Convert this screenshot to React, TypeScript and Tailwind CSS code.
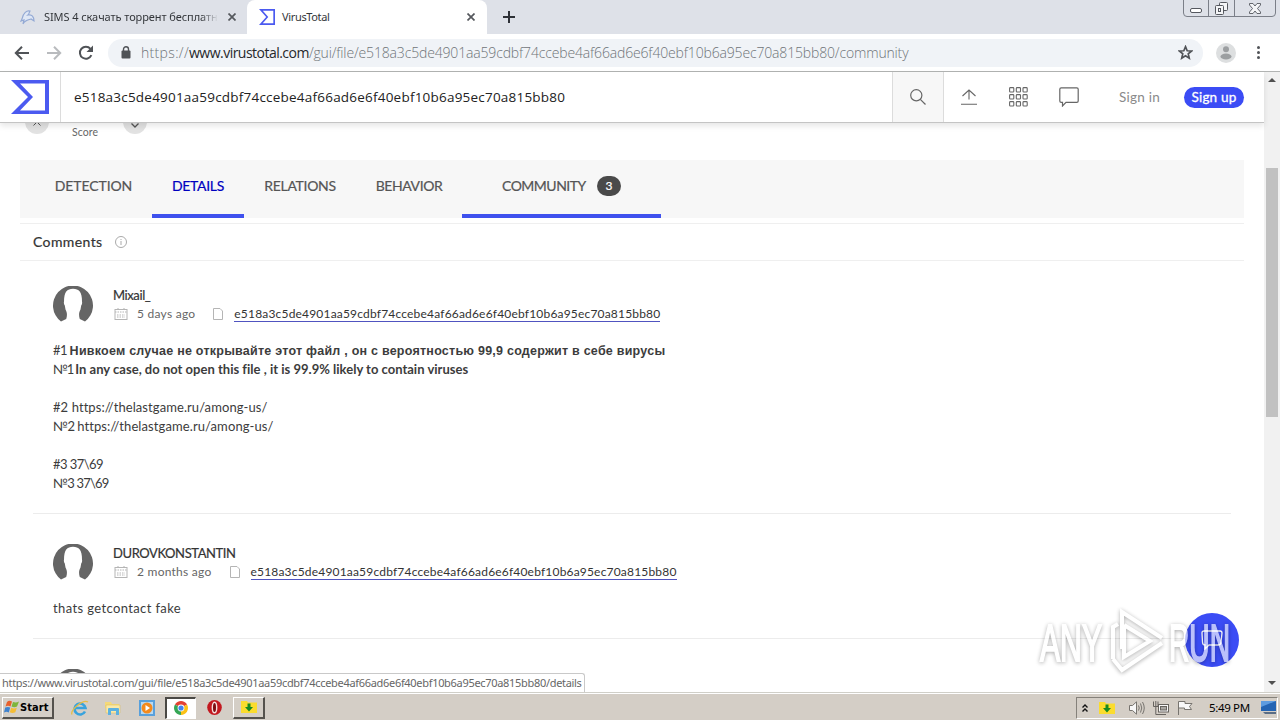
import type { ReactNode } from "react";

const HASH = "e518a3c5de4901aa59cdbf74ccebe4af66ad6e6f40ebf10b6a95ec70a815bb80";

function SigmaLogo({ className }: { className: string }) {
  return (
    <svg viewBox="0 0 38 34" className={className} preserveAspectRatio="none">
      <path
        d="M0 0H38V34H0L17 17ZM9 3.6L22 17L9 30.4H34V3.6Z"
        fill="#4b5af0"
        fillRule="evenodd"
      />
    </svg>
  );
}

function CloseIcon() {
  return (
    <svg viewBox="0 0 8 8" className="w-2 h-2">
      <path d="M0.5 0.5L7.5 7.5M7.5 0.5L0.5 7.5" stroke="#55585d" strokeWidth="1.7" />
    </svg>
  );
}

function TabStrip() {
  return (
    <div className="relative flex h-[34px] shrink-0 bg-[#dee1e8] font-['Noto_Sans','Open_Sans',sans-serif] text-[11px] text-[#33363a]">
      <div className="flex w-[247px] items-center pl-5">
        <svg viewBox="0 0 16 16" className="w-4 h-4 shrink-0" fill="none" stroke="#93a9d4" strokeWidth="1.2">
          <path d="M2 10C3 4 7 1 10 2C9 4 9 5 8 6C12 5 14 8 14 12L11 10C8 11 5 11 3 15L4 11L1 12Z" fill="#dfe7f5" />
        </svg>
        <div className="ml-2 w-[174px] overflow-hidden whitespace-nowrap tracking-[-0.08px] [mask-image:linear-gradient(to_right,black_90%,transparent)]">
          SIMS 4 скачать торрент бесплатн
        </div>
        <div className="ml-[10px]">
          <CloseIcon />
        </div>
      </div>
      <div className="flex w-[240px] items-center rounded-t-lg bg-white pl-3">
        <SigmaLogo className="w-4 h-4" />
        <span className="ml-[7px] w-[185px] tracking-[-0.35px]">VirusTotal</span>
        <CloseIcon />
      </div>
      <div className="flex items-center pl-4">
        <svg viewBox="0 0 12 12" className="w-3 h-3">
          <path d="M6 0V12M0 6H12" stroke="#2e3137" strokeWidth="2" />
        </svg>
      </div>
      <div className="absolute top-[-3px] right-1 flex h-5 w-[93px] rounded-b-[4px] border border-[#7b7f88]">
        <div className="flex w-[25px] items-end justify-center border-r border-[#7b7f88] pb-[3px]">
          <div className="h-[5px] w-3 rounded-[2px] border border-[#55585f] bg-white" />
        </div>
        <div className="flex w-[26px] items-center justify-center border-r border-[#7b7f88] pt-[2px]">
          <svg viewBox="0 0 13 13" className="w-[13px] h-[13px]" fill="#f4f5f7" stroke="#55585f">
            <rect x="4.5" y="0.5" width="8" height="8" rx="1" />
            <rect x="0.5" y="3.5" width="8" height="9" rx="1" />
            <rect x="3.5" y="6.5" width="2" height="3" />
          </svg>
        </div>
        <div className="flex flex-1 items-center justify-center pt-[2px]">
          <svg viewBox="0 0 12 11" className="w-3 h-[11px]" fill="#f4f5f7" stroke="#55585f" strokeWidth="0.9">
            <path d="M0.5 0.5H4L6 3L8 0.5H11.5V2L8.5 5.5L11.5 9V10.5H8L6 8L4 10.5H0.5V9L3.5 5.5L0.5 2Z" />
          </svg>
        </div>
      </div>
    </div>
  );
}

function Toolbar() {
  return (
    <div className="flex h-[38px] shrink-0 items-center border-b border-[#b2b4b3] bg-white pl-[14px]">
      <svg viewBox="0 0 16 14" className="w-4 h-[14px]" fill="none" stroke="#505357" strokeWidth="2">
        <path d="M15 7H2M8 0.8L1.8 7L8 13.2" />
      </svg>
      <svg viewBox="0 0 16 14" className="ml-4 w-4 h-[14px]" fill="none" stroke="#b9bbbe" strokeWidth="2">
        <path d="M1 7H14M8 0.8L14.2 7L8 13.2" />
      </svg>
      <svg viewBox="0 0 16 16" className="ml-4 w-4 h-4" fill="none" stroke="#505357" strokeWidth="2">
        <path d="M13.4 10.2A6 6 0 1 1 12.5 3.8" />
        <path d="M15 0.5V7H8.5Z" fill="#505357" stroke="none" />
      </svg>
      <div className="ml-[14px] flex h-7 w-[1095px] items-center rounded-full bg-[#f0f3f7] pl-[13px]">
        <svg viewBox="0 0 10 13" className="w-[10px] h-[13px]">
          <rect x="0.5" y="4.5" width="9" height="8" rx="1" fill="#505357" />
          <path d="M2.5 5V3.3A2.5 2.5 0 0 1 7.5 3.3V5" fill="none" stroke="#505357" strokeWidth="1.4" />
        </svg>
        <div className="ml-[10px] -mt-px w-[1037px] shrink-0 whitespace-nowrap font-['Open_Sans','Noto_Sans',sans-serif] text-[14px] font-light tracking-[-0.16px] text-[#6f7377]">
          <span className="tracking-[0.33px]">https://</span>
          <span className="font-normal text-[#26282b] tracking-[-0.52px]">www.virustotal.com</span>/gui/file/{HASH}/community
        </div>
        <svg viewBox="0 0 16 16" className="w-[15px] h-[15px] shrink-0" fill="none" stroke="#505357" strokeWidth="1.8">
          <path d="M8 1.8L9.8 6.1L14.5 6.4L10.9 9.4L12 14L8 11.5L4 14L5.1 9.4L1.5 6.4L6.2 6.1Z" />
        </svg>
      </div>
      <svg viewBox="0 0 20 20" className="ml-[13px] w-5 h-5">
        <circle cx="10" cy="10" r="10" fill="#dddfe0" />
        <circle cx="10" cy="6.3" r="3" fill="#9c9fa1" />
        <ellipse cx="10" cy="13.5" rx="5.5" ry="3" fill="#9c9fa1" />
      </svg>
      <div className="ml-[21px] flex flex-col gap-[2px]">
        <div className="h-[3px] w-[3px] rounded-full bg-[#505357]" />
        <div className="h-[3px] w-[3px] rounded-full bg-[#505357]" />
        <div className="h-[3px] w-[3px] rounded-full bg-[#505357]" />
      </div>
    </div>
  );
}

function SiteHeader() {
  return (
    <div className="relative z-10 flex h-[51px] shrink-0 items-center border-b border-[#c4c4c4] bg-white font-[Lato,sans-serif] shadow-[0_3px_6px_rgba(0,0,0,0.1)]">
      <div className="flex h-full w-[61px] items-center border-r border-[#dcdcdc] pl-[11px]">
        <SigmaLogo className="w-[38px] h-[34px]" />
      </div>
      <div className="w-[831px] pl-[13px] font-['Open_Sans',sans-serif] text-[13.5px] tracking-[0.215px] text-[#222]">
        {HASH}
      </div>
      <div className="flex h-full w-[52px] items-center justify-center border-x border-[#dcdcdc] bg-[#f7f7f7]">
        <svg viewBox="0 0 16 16" className="w-4 h-4" fill="none" stroke="#666" strokeWidth="1.2">
          <circle cx="6.3" cy="6.3" r="5.6" />
          <path d="M10.3 10.3L15.5 15.5" />
        </svg>
      </div>
      <svg viewBox="0 0 16 16" className="ml-[17px] w-4 h-4" fill="none" stroke="#666" strokeWidth="1.1">
        <path d="M8 10.5V1.5M1.5 7L8 1L14.5 7M0 15.2H16" />
      </svg>
      <svg viewBox="0 0 19 20" className="ml-[32px] w-[19px] h-5" fill="none" stroke="#666" strokeWidth="1.1">
        {[0.6, 7.6, 14.6].map((y) =>
          [0.6, 7.3, 14].map((x) => <rect key={x + "-" + y} x={x} y={y} width="4.2" height="4.4" rx="0.8" />)
        )}
      </svg>
      <svg viewBox="0 0 20 20" className="ml-[31px] w-5 h-5" fill="none" stroke="#666" strokeWidth="1.2">
        <path d="M2.2 0.8H17.8Q19.2 0.8 19.2 2.2V14Q19.2 15.4 17.8 15.4H7L3.5 19V15.4H2.2Q0.8 15.4 0.8 14V2.2Q0.8 0.8 2.2 0.8Z" />
      </svg>
      <span className="ml-[40px] w-[65px] text-[13.5px] tracking-[0.25px] text-[#8a8a8a]">Sign in</span>
      <span className="flex h-[21px] w-[60px] items-center justify-center rounded-full bg-[#3b4cf5] text-[13.5px] tracking-[0.2px] text-white [-webkit-text-stroke:0.3px_white]">
        Sign up
      </span>
    </div>
  );
}

function Tabs() {
  return (
    <div className="mr-5 ml-5 flex h-[58px] bg-[#f7f7f7] pl-[15px] text-[14px] text-[#555] [-webkit-text-stroke:0.2px_currentColor]">
      <div className="flex w-[117px] items-center justify-center pb-2 tracking-[-0.1px]">DETECTION</div>
      <div className="flex w-[92px] items-center justify-center border-b-4 border-[#3f51ee] pb-1 tracking-[-0.3px] text-[#0000bf]">
        DETAILS
      </div>
      <div className="flex w-[112px] items-center justify-center pb-2 tracking-[-0.3px]">RELATIONS</div>
      <div className="flex w-[106px] items-center justify-center pb-2 tracking-[-0.4px]">BEHAVIOR</div>
      <div className="flex w-[199px] items-center border-b-4 border-[#3f51ee] pl-10">
        <span className="w-[95px] pb-1 tracking-[-0.5px]">COMMUNITY</span>
        <span className="mb-[2px] flex h-5 w-6 items-center justify-center rounded-full bg-[#4a4a4a] text-[12px] text-white">3</span>
      </div>
    </div>
  );
}

function Avatar() {
  return (
    <svg viewBox="0 0 40 40" className="w-10 h-10 shrink-0">
      <path
        d="M8 35.5A20 20 0 1 1 32 35.5L26.8 33C25.5 29 26 26 27.5 23.5L28.2 19.5Q29.5 18 29 15.5C29 6 26 2.8 20 2.8S11 6 11 15.5Q10.5 18 11.8 19.5L12.5 23.5C14 26 14.5 29 13.2 33Z"
        fill="#656565"
      />
    </svg>
  );
}

function Comment({ name, age, children }: { name: string; age: string; children?: ReactNode }) {
  return (
    <div className="ml-[33px] mr-[33px] border-b border-[#ececec] pt-[30px] pb-5 pl-5">
      <div className="flex h-[55px]">
        <Avatar />
        <div className="ml-5">
          <div className="h-[18px] text-[13px] leading-[18px] tracking-[-0.4px] text-[#333] [-webkit-text-stroke:0.2px_#333]">{name}</div>
          <div className="flex h-[19px] items-center text-[12px] text-[#666]">
            <svg viewBox="0 0 14 12" className="ml-[1px] w-[14px] h-3" fill="none" stroke="#b5b5b5">
              <rect x="1" y="1.5" width="12" height="10" />
              <path d="M1 4H13M3 7H11M3 9H11M4 0V2M10 0V2" strokeDasharray="1.5 1" />
            </svg>
            <span className="ml-[9px] tracking-[0.25px]">{age}</span>
            <svg viewBox="0 0 10 12" className="ml-[18px] w-[10px] h-3" fill="none" stroke="#b5b5b5">
              <path d="M0.5 0.5H7L9.5 3V11.5H0.5Z" />
            </svg>
            <a className="ml-[11px] h-[16px] border-b border-[#5054c0] leading-[15px] tracking-[0.185px] text-[#333]">{HASH}</a>
          </div>
        </div>
      </div>
      <div className="text-[13px] leading-[19px] text-[#3c3c3c]">{children}</div>
    </div>
  );
}

function Page() {
  return (
    <div className="h-[569px] overflow-hidden bg-white font-[Lato,sans-serif]">
      <div className="flex h-[37px] items-start pl-[25px] text-[10.5px] text-[#666]">
        <div className="-mt-[13px] flex h-6 w-6 items-end justify-center rounded-full bg-[#e2e2e2] pb-2">
          <svg viewBox="0 0 8 5" className="w-2 h-[5px]" fill="none" stroke="#555">
            <path d="M0.5 4.5L4 1L7.5 4.5" />
          </svg>
        </div>
        <span className="ml-[23px] mt-[2px] w-[51px] tracking-[0.1px]">Score</span>
        <div className="-mt-[13px] flex h-6 w-6 items-end justify-center rounded-full bg-[#e2e2e2] pb-1.5">
          <svg viewBox="0 0 8 5" className="w-2 h-[5px]" fill="none" stroke="#555" strokeWidth="1.3">
            <path d="M0.5 0.5L4 4L7.5 0.5" />
          </svg>
        </div>
      </div>
      <Tabs />
      <div className="mx-5 mt-[5px] flex h-[38px] items-center border-y border-[#efefef] pl-[13px] text-[14px] text-[#333] [-webkit-text-stroke:0.2px_currentColor]">
        <span className="w-[82px] pb-[2px] tracking-[0.4px]">Comments</span>
        <svg viewBox="0 0 12 12" className="w-3 h-3" fill="none" stroke="#aaa">
          <circle cx="6" cy="6" r="5.5" />
          <path d="M6 5V9M6 3V4" />
        </svg>
      </div>
      <div className="-mt-[5px]">
        <Comment name="Mixail_" age="5 days ago">
          <p className="h-[19px]">
            <span className="tracking-[-0.6px]">#1 </span>
            <b className="font-['Liberation_Sans',sans-serif] text-[12.5px] tracking-[0.24px]">
              Нивкоем случае не открывайте этот файл , он с вероятностью 99,9 содержит в себе вирусы
            </b>
          </p>
          <p className="h-[19px]">
            <span className="tracking-[-1.2px]">№1 </span>
            <b className="tracking-[0.01px]">In any case, do not open this file , it is 99.9% likely to contain viruses</b>
          </p>
          <p className="mt-[19px] tracking-[0.08px]">#2 https://thelastgame.ru/among-us/</p>
          <p className="tracking-[0.1px]">
            <span className="tracking-[-0.6px]">№2 </span>https://thelastgame.ru/among-us/
          </p>
          <p className="mt-[19px] tracking-[-0.55px]">#3 37\69</p>
          <p className="tracking-[-0.8px]">№3 37\69</p>
        </Comment>
        <Comment name="DUROVKONSTANTIN" age="2 months ago">
          <p className="tracking-[0.38px]">thats getcontact fake</p>
        </Comment>
        <Comment name="Nikita_Sh" age="2 months ago" />
      </div>
    </div>
  );
}

function Watermark() {
  return (
    <svg viewBox="0 0 200 70" className="absolute top-[605px] left-[1036px] h-[70px] w-[200px] opacity-65 drop-shadow-[0_1px_2px_rgba(0,0,0,0.5)]">
      <g fill="#fff" stroke="#fff" strokeWidth="2" fontFamily="'Liberation Sans', sans-serif" fontSize="52">
        <text x="4" y="56" textLength="62" lengthAdjust="spacingAndGlyphs">ANY</text>
        <text x="133" y="56" textLength="61" lengthAdjust="spacingAndGlyphs">RUN</text>
      </g>
      <g fill="none" stroke="#fff" strokeWidth="4">
        <path d="M77 54V22L82 19M86 44V7L126 33M88 20V52L114 36L88 20M77 54L86 65L126 38" />
      </g>
    </svg>
  );
}

function DownloadFolder() {
  return (
    <svg viewBox="0 0 16 14" className="w-4 h-[14px] shrink-0">
      <path d="M0 1H6L7 2.5H16V13H0Z" fill="#fbdc2e" />
      <path d="M6.5 3.5H9.5V7H12L8 11.5L4 7H6.5Z" fill="#168a21" />
    </svg>
  );
}

function Taskbar() {
  return (
    <div className="flex h-7 shrink-0 items-center border-t border-[#d0cfc8] bg-[#d4cec6] shadow-[inset_0_1px_0_#fff]">
      <div className="ml-[2px] mt-[2px] flex h-[22px] w-[52px] items-center border-t border-l border-r-2 border-b-2 border-t-white border-l-white border-r-[#55524d] border-b-[#55524d] font-['DejaVu_Sans_Condensed','DejaVu_Sans',sans-serif] text-[11px] font-bold text-black">
        <svg viewBox="0 0 16 14" className="ml-[1px] w-4 h-[14px] shrink-0">
          <path d="M3 2Q5 0 8 1.5L6.5 6.5Q4 5.2 1.5 6.5Z" fill="#e8602c" />
          <path d="M9 2Q12 3.2 15 1.5L13 6.5Q10.5 7.8 7.5 6.5Z" fill="#7eb53c" />
          <path d="M1.2 7.5Q4 6.5 6.2 7.5L4.8 12.5Q2.5 11.2 0 12.5Z" fill="#3f83cf" />
          <path d="M7.2 7.8Q10 9 12.8 7.8L11.3 12.3Q8.5 13.5 5.8 12.3Z" fill="#f5bd35" />
        </svg>
        <span className="pt-0.5 tracking-[0.1px]">Start</span>
      </div>
      <svg viewBox="0 0 18 16" className="ml-[17px] mt-[2px] w-[18px] h-4" fill="none">
        <path d="M14 11.5A5.5 5.5 0 1 1 14.5 8H5" stroke="#38a3dd" strokeWidth="2.6" />
        <path d="M1 14.5C-1 10 12-1 17 2" stroke="#e5bd45" strokeWidth="1.3" />
      </svg>
      <svg viewBox="0 0 16 16" className="ml-4 mt-[2px] w-4 h-4">
        <path d="M0 2H6L7 4H14V8H0Z" fill="#f5d978" />
        <path d="M1 5H15V13H1Z" fill="#f9e9a8" stroke="#d9b95a" strokeWidth="0.5" />
        <path d="M3 15V9Q3 8 4 8H13Q14 8 14 9V15H11V11H6V15Z" fill="#5cb1e0" />
      </svg>
      <div className="ml-[18px] mt-[2px] flex h-4 w-4 items-center justify-center border-2 border-[#58a0dc] bg-[#b7d9f2]">
        <svg viewBox="0 0 12 12" className="w-3 h-3">
          <circle cx="6" cy="6" r="5.5" fill="#f48a1d" />
          <path d="M4.5 3L9 6L4.5 9Z" fill="#fff" />
        </svg>
      </div>
      <div className="ml-[10px] mt-[2px] flex h-[22px] w-[31px] items-center justify-center border-t-2 border-l-2 border-r border-b border-t-[#4a4844] border-l-[#4a4844] border-r-white border-b-white bg-white">
        <svg viewBox="0 0 14 14" className="w-[14px] h-[14px]">
          <path d="M7 7L0.94 3.5A7 7 0 0 1 13.06 3.5Z" fill="#e34133" />
          <path d="M7 7L0.94 3.5A7 7 0 0 0 7 14Z" fill="#35a655" />
          <path d="M7 7L13.06 3.5A7 7 0 0 1 7 14Z" fill="#fbc116" />
          <circle cx="7" cy="7" r="3.4" fill="#fff" />
          <circle cx="7" cy="7" r="2.6" fill="#4283ee" />
        </svg>
      </div>
      <svg viewBox="0 0 15 15" className="ml-[11px] mt-[2px] w-[15px] h-[15px]">
        <ellipse cx="7.5" cy="7.5" rx="7.3" ry="7.5" fill="#c3181f" />
        <ellipse cx="7.5" cy="7.5" rx="2.2" ry="5.3" fill="#7d0d10" stroke="#f5dede" strokeWidth="1.4" />
      </svg>
      <div className="ml-[11px] mt-[2px] flex h-[22px] w-[32px] items-center justify-center border-t border-l border-r-2 border-b-2 border-t-white border-l-white border-r-[#55524d] border-b-[#55524d]">
        <DownloadFolder />
      </div>
      <div className="ml-auto mr-[2px] mt-[2px] flex h-[22px] w-[202px] items-center border border-t-[#85817a] border-l-[#85817a] border-r-white border-b-white pl-[5px]">
        <svg viewBox="0 0 6 8" className="w-[6px] h-2" fill="none" stroke="#111" strokeWidth="1.4">
          <path d="M0.5 3.5L3 1L5.5 3.5M0.5 7.5L3 5L5.5 7.5" />
        </svg>
        <span className="ml-[11px] flex">
          <DownloadFolder />
        </span>
        <svg viewBox="0 0 16 14" className="ml-[14px] w-4 h-[14px]" fill="#f8f8f8" stroke="#77746f">
          <path d="M0.5 4.5H3.5L7.5 0.8V13.2L3.5 9.5H0.5Z" />
          <path d="M9.5 4.5Q11 7 9.5 9.5M11.5 2.5Q14 7 11.5 11.5M13.5 1Q17 7 13.5 13" fill="none" />
        </svg>
        <svg viewBox="0 0 16 14" className="ml-[8px] w-4 h-[14px]" fill="#f8f8f8" stroke="#66635e">
          <rect x="5.5" y="3.5" width="10" height="7.5" />
          <rect x="7.5" y="5.5" width="6" height="3.5" fill="#a9a7a3" />
          <path d="M0.5 0.5V5.5H5V0.5M2.8 0V13.5H13" fill="none" />
        </svg>
        <svg viewBox="0 0 16 14" className="ml-[8px] w-4 h-[14px]" fill="#f8f8f8" stroke="#77746f">
          <path d="M1.5 14V0.5H8V2.5H15L12.5 5.5L14.5 8.5H7.5V7H1.5" />
        </svg>
        <span className="ml-4 whitespace-nowrap font-['Noto_Sans',sans-serif] text-[11.5px] tracking-[-0.35px] text-black">5:49 PM</span>
        <svg viewBox="0 0 16 13" className="ml-auto w-[16px] h-[13px]">
          <path d="M0 0H15V10H0Z" fill="#2464b3" />
          <path d="M0 0H15L0 6Z" fill="#5e9ce0" />
          <path d="M2 11H15V13H4Z" fill="#5a6d85" />
        </svg>
      </div>
    </div>
  );
}

export default function App() {
  return (
    <div className="relative flex h-[720px] w-[1280px] flex-col overflow-hidden bg-white">
      <TabStrip />
      <Toolbar />
      <div className="flex h-[620px] shrink-0">
        <div className="w-[1264px]">
          <SiteHeader />
          <Page />
        </div>
        <div className="flex w-4 flex-col items-center bg-[#f1f1f1]">
          <div className="mt-[6px] border-x-4 border-b-4 border-x-transparent border-b-[#505050]" />
          <div className="mt-[86px] h-[249px] w-3 bg-[#c1c1c1]" />
          <div className="mt-auto mb-[7px] border-x-4 border-t-4 border-x-transparent border-t-[#505050]" />
        </div>
      </div>
      <Taskbar />
      <div className="absolute top-[673px] left-0 flex h-[19px] w-[585px] items-center rounded-tr-[3px] border-t border-r border-[#c9c9c9] bg-white pl-[2px] font-['Noto_Sans',sans-serif] text-[11px] tracking-[-0.31px] whitespace-nowrap text-[#666]">
        https://www.virustotal.com/gui/file/{HASH}/details
      </div>
      <div className="absolute top-[613px] left-[1185px] flex h-[54px] w-[54px] items-center justify-center rounded-full bg-[#3b4cf5]">
        <svg viewBox="0 0 22 20" className="h-5 w-[22px]" fill="none" stroke="#fff" strokeWidth="1.3">
          <path d="M3 1H19Q21 1 21 3L20 12Q20 15 17 15H8L4 19V15Q1.5 15 1.5 12L1 3Q1 1 3 1Z" />
        </svg>
      </div>
      <Watermark />
    </div>
  );
}
